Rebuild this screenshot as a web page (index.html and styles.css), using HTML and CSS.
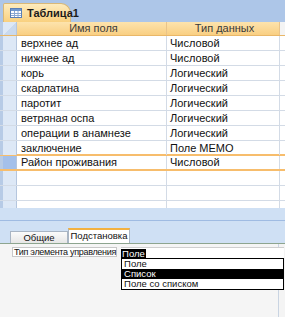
FILE: index.html
```html
<!DOCTYPE html>
<html lang="ru">
<head>
  <meta charset="UTF-8">
  <title>Таблица1</title>
  <link rel="stylesheet" href="styles.css">
</head>
<body>
  <div class="doc-bar">
    <div class="doc-tab">
      <svg class="tab-icon" width="12" height="10" viewBox="0 0 12 10">
        <rect x="0.5" y="0.5" width="11" height="9" fill="#fff" stroke="#5a7fb5"/>
        <rect x="1" y="1" width="10" height="2" fill="#6f97cf"/>
        <path d="M1 5.5h10M1 7.5h10M4.5 3v6M8 3v6" stroke="#8aa8d2" stroke-width="1"/>
      </svg>
      <span>Таблица1</span>
    </div>
  </div>

  <div class="grid">
    <div class="row head">
      <div class="sel corner"></div>
      <div class="cell c1">Имя поля</div>
      <div class="cell c2">Тип данных</div>
      <div class="cell fill"></div>
    </div>
    <div class="row"><div class="sel"></div><div class="cell c1">верхнее ад</div><div class="cell c2">Числовой</div><div class="cell fill"></div></div>
    <div class="row"><div class="sel"></div><div class="cell c1">нижнее ад</div><div class="cell c2">Числовой</div><div class="cell fill"></div></div>
    <div class="row"><div class="sel"></div><div class="cell c1">корь</div><div class="cell c2">Логический</div><div class="cell fill"></div></div>
    <div class="row"><div class="sel"></div><div class="cell c1">скарлатина</div><div class="cell c2">Логический</div><div class="cell fill"></div></div>
    <div class="row"><div class="sel"></div><div class="cell c1">паротит</div><div class="cell c2">Логический</div><div class="cell fill"></div></div>
    <div class="row"><div class="sel"></div><div class="cell c1">ветряная оспа</div><div class="cell c2">Логический</div><div class="cell fill"></div></div>
    <div class="row"><div class="sel"></div><div class="cell c1">операции в анамнезе</div><div class="cell c2">Логический</div><div class="cell fill"></div></div>
    <div class="row"><div class="sel"></div><div class="cell c1">заключение</div><div class="cell c2">Поле MEMO</div><div class="cell fill"></div></div>
    <div class="row current"><div class="sel"></div><div class="cell c1">Район проживания</div><div class="cell c2">Числовой</div><div class="cell fill"></div></div>
    <div class="row"><div class="sel"></div><div class="cell c1"></div><div class="cell c2"></div><div class="cell fill"></div></div>
    <div class="row"><div class="sel"></div><div class="cell c1"></div><div class="cell c2"></div><div class="cell fill"></div></div>
    <div class="row"><div class="sel"></div><div class="cell c1"></div><div class="cell c2"></div><div class="cell fill"></div></div>
  </div>

  <div class="splitter"><div class="split-line"></div></div>

  <div class="props">
    <div class="prop-tabs">
      <div class="ptab">Общие</div>
      <div class="ptab active">Подстановка</div>
    </div>
    <div class="prop-panel">
      <div class="prop-row">
        <div class="prop-label">Тип элемента управления</div>
        <div class="combo">
          <span class="combo-val">Поле</span>
          <ul class="dropdown">
            <li>Поле</li>
            <li class="hi">Список</li>
            <li>Поле со списком</li>
          </ul>
        </div>
      </div>
    </div>
  </div>
</body>
</html>
```

FILE: styles.css
```css
body { margin: 0; width: 285px; height: 317px; overflow: hidden; font-family: "Liberation Sans", Arial, sans-serif; font-size: 11px; color: #111; background: #f4f4f4; }

.doc-bar { height: 22px; background: #adc6e8; display: flex; align-items: flex-end; padding-left: 3px; box-sizing: border-box; }
.doc-tab { height: 19px; width: 68px; box-sizing: border-box; display: flex; align-items: center; gap: 5px; padding-left: 6px; font-weight: bold; font-size: 11px; color: #1b1b1b; background: linear-gradient(#fdebbd, #f9d07f); border: 1px solid #d8b878; border-bottom: none; border-radius: 2px 10px 0 0; }
.tab-icon { flex: none; }

.grid { height: 186px; overflow: hidden; background: #fff; }
.row { display: flex; height: 15px; box-sizing: border-box; border-bottom: 1px solid #d3dbe6; }
.row.head { height: 14px; background: linear-gradient(#fde3ad, #f9cf82); border-bottom: 1px solid #e9b768; }
.sel { width: 17px; flex: none; box-sizing: border-box; background: #dde8f6; border-left: 3px solid #b7cbe6; border-right: 1px solid #b5c6de; }
.corner { background: linear-gradient(135deg, #dde8f6 50%, #c9d9ee 50%); }
.cell { box-sizing: border-box; line-height: 14px; white-space: nowrap; overflow: hidden; border-right: 1px solid #d3dbe6; }
.c1 { width: 150px; padding-left: 4px; }
.c2 { width: 113px; padding-left: 3px; }
.fill { flex: 1; border-right: none; }
.head .cell { text-align: center; color: #3a3a3a; border-right-color: #e9c48a; line-height: 13px; }
.head .fill { background: #f4f4f4; }
.row.current { border-top: 2px solid #f7bd6c; border-bottom: 2px solid #f7bd6c; margin-top: -2px; height: 17px; }
.row.current .cell { line-height: 13px; }
.row.current .sel { background: #a4c0ea; }

.splitter { height: 20px; box-sizing: border-box; background: #cfe0f4; padding-top: 12px; }
.split-line { height: 1px; background: #9fbbe2; }

.props { font-size: 9.5px; }
.prop-tabs { display: flex; align-items: flex-end; height: 15px; padding-left: 10px; background: #cfe0f4; border-bottom: 1px solid #8da58f; }
.ptab { height: 12px; width: 58px; box-sizing: border-box; text-align: center; line-height: 11px; background: linear-gradient(#fbfbfb, #e6e6e6); border: 1px solid #a9b5c4; border-bottom: none; }
.ptab.active { height: 15px; width: 62px; background: #fff; border-top: 2px solid #f3b140; line-height: 12px; }

.prop-panel { height: 74px; background: #f5f5f5; border-right: 1px solid #c9d4e2; margin-right: 6px; padding: 3px 0 0 12px; }
.prop-row { display: flex; align-items: flex-start; }
.prop-label { width: 108px; height: 10px; box-sizing: border-box; line-height: 9px; padding-left: 1px; font-size: 9px; letter-spacing: -0.3px; background: #fff; border: 1px solid #c8c8c8; white-space: nowrap; }
.combo { position: relative; width: 163px; height: 11px; margin-left: 4px; background: #fff; border-top: 1px solid #cfcfcf; flex: none; }
.combo-val { display: inline-block; background: #000; color: #fff; padding: 0 1px; line-height: 10px; height: 10px; }
.dropdown { position: absolute; left: 0; top: 10px; width: 163px; margin: 0; padding: 0; list-style: none; background: #fff; border: 1px solid #000; box-sizing: border-box; }
.dropdown li { height: 10px; line-height: 10px; padding-left: 2px; }
.dropdown li.hi { background: #000; color: #fff; }
```
